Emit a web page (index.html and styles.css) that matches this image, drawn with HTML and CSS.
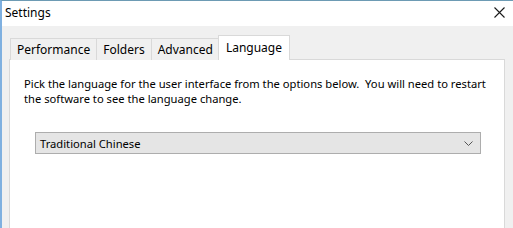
FILE: index.html
```html
<!DOCTYPE html>
<html lang="en">
<head>
    <meta charset="UTF-8">
    <title>Settings</title>
    <link rel="stylesheet" href="styles.css">
</head>
<body>
    <div class="window">
        <div class="titlebar">
            <span class="title">Settings</span>
            <span class="close">
                <svg width="11" height="11" viewBox="0 0 11 11"><path d="M0.5 0.5 L10.5 10.5 M10.5 0.5 L0.5 10.5" stroke="#1a1a1a" stroke-width="1.1" fill="none"/></svg>
            </span>
        </div>

        <div class="client">
            <div class="tabs">
                <div class="tab">Performance</div>
                <div class="tab">Folders</div>
                <div class="tab">Advanced</div>
                <div class="tab active">Language</div>
            </div>

            <div class="panel">
                <p class="info">Pick the language for the user interface from the options below.&nbsp; You will need to restart the software to see the language change.</p>

                <div class="select">
                    <span>Traditional Chinese</span>
                    <svg width="9" height="5" viewBox="0 0 9 5"><path d="M0.5 0.5 L4.5 4.5 L8.5 0.5" stroke="#555" stroke-width="1" fill="none"/></svg>
                </div>
            </div>
        </div>
    </div>
</body>
</html>
```

FILE: styles.css
```css
* {
    margin: 0;
    padding: 0;
    box-sizing: border-box;
}

body {
    width: 513px;
    height: 228px;
    overflow: hidden;
    background: #f0f0f0;
    font-family: 'Noto Sans', 'Open Sans', sans-serif;
    font-size: 12px;
    color: #000;
}

.window {
    height: 228px;
    border-top: 1px solid #6d9bb4;
    border-left: 2px solid #7fb0e0;
    display: flex;
    flex-direction: column;
}

.titlebar {
    height: 25px;
    background: #fff;
    display: flex;
    align-items: center;
    justify-content: space-between;
    padding: 0 8px 2px 3px;
}

.title {
    font-size: 12px;
}

.close {
    display: flex;
}

.client {
    flex: 1;
    padding: 9px 8px 0 7px;
    display: flex;
    flex-direction: column;
}

.tabs {
    display: flex;
    align-items: flex-end;
    padding-left: 1px;
    margin-bottom: -1px;
    position: relative;
    z-index: 1;
}

.tab {
    height: 22px;
    line-height: 21px;
    padding: 0 6px;
    border: 1px solid #d9d9d9;
    border-bottom: none;
    margin-right: -1px;
    background: #f0f0f0;
}

.tab.active {
    height: 25px;
    line-height: 23px;
    padding: 0 7px 0 7px;
    margin-left: -1px;
    background: #fff;
}

.panel {
    flex: 1;
    background: #fff;
    border: 1px solid #d9d9d9;
    border-bottom: none;
    padding: 16px 10px 0 14px;
    font-size: 11.2px;
}

.info {
    line-height: 15px;
}

.select {
    width: 446px;
    height: 22px;
    margin: 26px 0 0 11px;
    background: #e5e5e5;
    border: 1px solid #adadad;
    display: flex;
    align-items: center;
    justify-content: space-between;
    padding: 0 7px 0 4px;
}
```
